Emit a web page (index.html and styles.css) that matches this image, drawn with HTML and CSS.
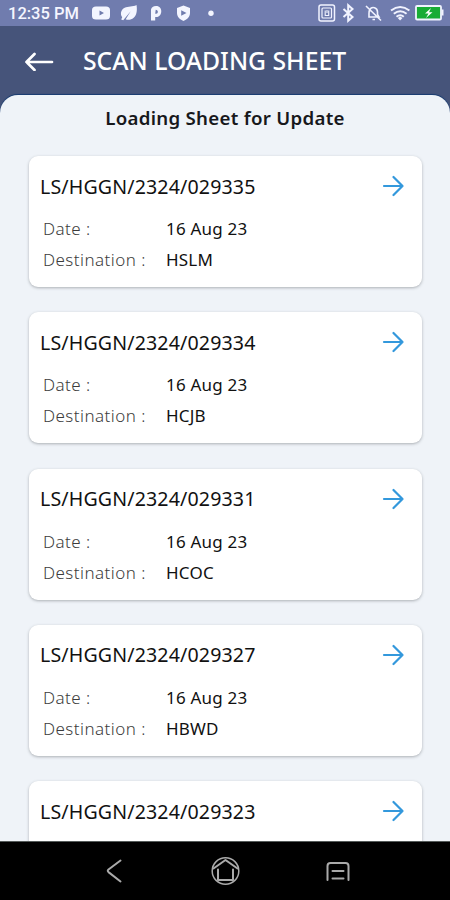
FILE: index.html
```
<!DOCTYPE html>
<html lang="en">
<head>
<meta charset="utf-8">
<title>Scan Loading Sheet</title>
<link rel="stylesheet" href="styles.css">
</head>
<body>
<div class="screen">
  <div class="status">
    <span class="clock">12:35 PM</span>
    <svg class="notices" width="126" height="26" viewBox="90 0 126 26" fill="#f3f5ff">
      <path fill-rule="evenodd" d="M96 6.500h10q4 0 4 3.500v6q0 3.500-4 3.500h-10q-4 0-4-3.500v-6Q92 6.500 96 6.500zm3.500 4v5l4.500-2.500z"/>
      <path d="M136.500 5c1.200 6.500-.2 13-6 14.600-2 .5-3.600.2-4.800-.4l5-8-7.500 9-2-.8 1-2.200c-2.300-3-1.300-7.500 2.500-9.400 3.500-1.800 8-.7 11.800-2.800z"/>
      <path fill-rule="evenodd" d="M151 9.500q.8-3.500 5-3.500c7.500 0 6.500 11 .5 11h-1.300v3.500h-4.200zm4.700.3-.5 4h1c2.200 0 2.400-4-.5-4z"/>
      <path fill-rule="evenodd" d="M183.500 5.500 190 8v5c0 3.500-2.600 6.500-6.500 8-3.900-1.500-6.500-4.500-6.500-8V8zm-2.300 4.700v5.600l5.300-2.800z"/>
      <circle cx="211" cy="13.300" r="2.700"/>
    </svg>
    <svg class="signals" width="130" height="26" viewBox="315 0 130 26" fill="none" stroke="#f1f3ff" stroke-width="1.500">
      <rect x="319" y="5" width="15.500" height="16" rx="2"/>
      <rect x="322" y="8" width="9.500" height="10" rx="1" stroke-width="1.200"/>
      <path d="M325.200 10.500v5h3.500v-5M327 10v3" stroke-width="1.100"/>
      <path d="m343.500 9 9 8-4.300 3.700V5.300l4.300 3.700-9 8" stroke-width="2"/>
      <path d="M369 17h10l-1.500-2.500V12c0-4.500-5.500-6-7.700-2.500-1 1.500-.8 3.500-.8 5zM366 6l15 14.500M372.500 19.500h2.500" stroke-width="1.600"/>
      <path d="M391 10.500q9.200-7 18.400 0M393.800 13.700q6.400-5 12.800 0M396.500 16.800q3.700-3 7.300 0" stroke-width="2"/>
      <path d="m397.800 18 2.300-1.500 2.400 1.500-2.400 2.600z" fill="#f1f3ff" stroke="none"/>
      <rect x="416" y="6" width="25" height="13.500" rx="1" fill="#18ac35" stroke-width="1.800"/>
      <path d="M442.500 9.500v6" stroke-width="2"/>
      <path d="m431 8-6 5.500h3.500L426 18l6.500-5.700H429z" fill="#fff" stroke="none"/>
    </svg>
  </div>
  <header class="bar">
    <svg width="30" height="20" viewBox="0 0 30 20" fill="none" stroke="#fff" stroke-width="2.700" stroke-linecap="round" stroke-linejoin="round"><path d="M28 11H2.500M10.500 3l-8 8 8 8"/></svg>
    <h1>SCAN LOADING SHEET</h1>
  </header>
  <main class="sheet">
    <h2>Loading Sheet for Update</h2>
    <div class="list">
      <section class="card">
        <div class="head"><span class="code">LS/HGGN/2324/029335</span><svg class="go" width="22" height="22" viewBox="0 0 22 22"><path d="M2 11h18.500M11.500 2l9 9-9 9"/></svg></div>
        <dl><dt>Date :</dt><dd>16 Aug 23</dd><dt>Destination :</dt><dd>HSLM</dd></dl>
      </section>
      <section class="card">
        <div class="head"><span class="code">LS/HGGN/2324/029334</span><svg class="go" width="22" height="22" viewBox="0 0 22 22"><path d="M2 11h18.500M11.500 2l9 9-9 9"/></svg></div>
        <dl><dt>Date :</dt><dd>16 Aug 23</dd><dt>Destination :</dt><dd>HCJB</dd></dl>
      </section>
      <section class="card">
        <div class="head"><span class="code">LS/HGGN/2324/029331</span><svg class="go" width="22" height="22" viewBox="0 0 22 22"><path d="M2 11h18.500M11.500 2l9 9-9 9"/></svg></div>
        <dl><dt>Date :</dt><dd>16 Aug 23</dd><dt>Destination :</dt><dd>HCOC</dd></dl>
      </section>
      <section class="card">
        <div class="head"><span class="code">LS/HGGN/2324/029327</span><svg class="go" width="22" height="22" viewBox="0 0 22 22"><path d="M2 11h18.500M11.500 2l9 9-9 9"/></svg></div>
        <dl><dt>Date :</dt><dd>16 Aug 23</dd><dt>Destination :</dt><dd>HBWD</dd></dl>
      </section>
      <section class="card">
        <div class="head"><span class="code">LS/HGGN/2324/029323</span><svg class="go" width="22" height="22" viewBox="0 0 22 22"><path d="M2 11h18.500M11.500 2l9 9-9 9"/></svg></div>
      </section>
    </div>
  </main>
  <nav class="keys">
    <svg width="30" height="30" viewBox="0 0 30 30"><path d="M21.500 4.500 9.500 13.500q-1.500 1.300 0 2.600l12 9.400"/></svg>
    <svg width="30" height="30" viewBox="0 0 30 30"><circle cx="14.500" cy="15" r="13.300" stroke-width="1.500"/><path d="M2.500 12.500 14.500 4l12 8.500M7 13.500v10.500h15V13.500"/></svg>
    <svg width="30" height="30" viewBox="0 0 30 30"><path d="M4.500 24V10q0-3 3-3h15q3 0 3 3v14M9.500 15h11M9.500 22.500h11"/></svg>
  </nav>
</div>
</body>
</html>
```
FILE: styles.css
```
* { box-sizing: border-box; }
body { margin: 0; font-family: "Noto Sans", sans-serif; }
.screen { width: 450px; height: 900px; display: flex; flex-direction: column; overflow: hidden; background: #46547a; }
.status { height: 26px; flex: none; display: flex; align-items: center; background: #707cae; padding: 0 5px 0 8px; }
.clock { width: 82px; color: #f5f6ff; font: 500 16.5px/26px Roboto, sans-serif; padding-top: 1px; white-space: nowrap; }
.signals { margin-left: auto; }
.bar { height: 69px; flex: none; display: flex; align-items: center; gap: 29px; padding: 0 0 0 24px; }
h1 { margin: 0; color: #fff; font-size: 24.750px; line-height: 34px; font-weight: 500; white-space: nowrap; }
.sheet { flex: 1; min-height: 0; overflow: hidden; background: #eff3f8; border-radius: 18px 18px 0 0; box-shadow: 0 -1px 1px #173b70; }
h2 { margin: 0; padding-top: 10px; height: 61px; color: #17181c; text-align: center; font-size: 18.700px; letter-spacing: .28px; line-height: 26px; font-weight: 600; }
.list { display: flex; flex-direction: column; gap: 25.300px; padding: 0 28px 0 29px; }
.card { height: 131px; flex: none; padding: 16px 18px 0 11px; background: #fff; border-radius: 9px; box-shadow: 0 1px 3px rgba(60, 65, 70, .38); }
.head { height: 28px; display: flex; align-items: center; justify-content: space-between; }
.code { font-size: 19.600px; letter-spacing: .14px; color: #111; white-space: nowrap; }
.go { fill: none; stroke: #3398dc; stroke-width: 2.200; stroke-linecap: round; stroke-linejoin: round; }
dl { margin: 13px 0 0 3px; display: grid; grid-template-columns: 123px 1fr; grid-auto-rows: 31px; line-height: 31px; font-size: 17px; white-space: nowrap; }
dt { color: #3c3c3c; font-weight: 300; letter-spacing: .45px; }
dd { margin: 0; color: #111; font-weight: 450; letter-spacing: .2px; }
.keys { height: 59px; flex: none; display: flex; justify-content: space-between; align-items: center; padding: 0 97px 0 99px; background: #000; border-top: 1px solid #555b5a; }
.keys svg { fill: none; stroke: #aaa; stroke-width: 2; stroke-linecap: round; stroke-linejoin: round; }
```
